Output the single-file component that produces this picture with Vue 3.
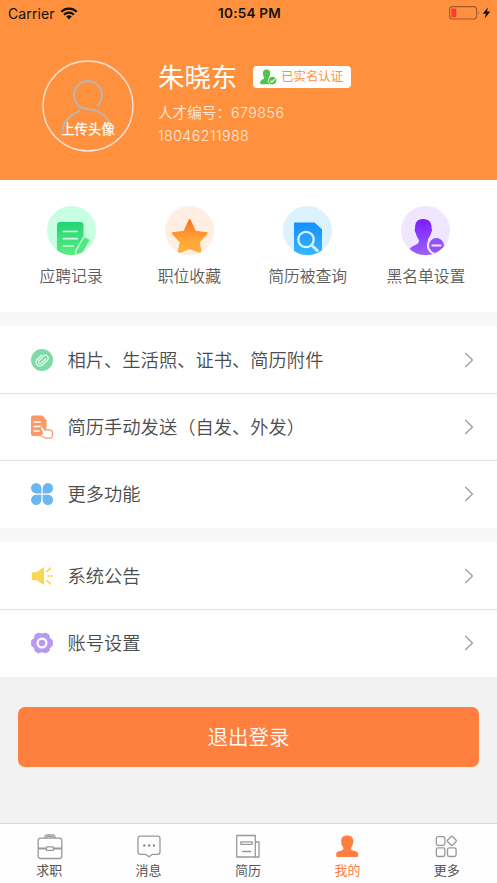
<script setup>
const shortcuts = [
  { key: 'record', label: '应聘记录' },
  { key: 'star', label: '职位收藏' },
  { key: 'search', label: '简历被查询' },
  { key: 'block', label: '黑名单设置' },
]
const groups = [
  [
    { key: 'clip', label: '相片、生活照、证书、简历附件' },
    { key: 'send', label: '简历手动发送（自发、外发）' },
    { key: 'more', label: '更多功能' },
  ],
  [
    { key: 'notice', label: '系统公告' },
    { key: 'gear', label: '账号设置' },
  ],
]
const tabs = [
  { key: 'job', label: '求职' },
  { key: 'msg', label: '消息' },
  { key: 'resume', label: '简历' },
  { key: 'me', label: '我的', active: true },
  { key: 'all', label: '更多' },
]
</script>

<template>
  <div class="page">
    <header class="hero">
      <div class="status">
        <div class="carrier">
          <span>Carrier</span>
          <svg width="18" height="13" viewBox="0 0 18 13" fill="none" stroke="#111" stroke-width="2.2">
            <path d="M1.3 4.7a11 11 0 0 1 15.4 0" />
            <path d="M4.1 7.7a7 7 0 0 1 9.8 0" />
            <path d="M9 12.4 6.2 9.6a4 4 0 0 1 5.6 0Z" fill="#111" stroke="none" />
          </svg>
        </div>
        <span class="time">10:54 PM</span>
        <svg class="battery" width="43" height="14" viewBox="0 0 43 14">
          <rect x="1.6" y=".6" width="27" height="12.4" rx="3" fill="none" stroke="#9c5c30" stroke-width="1.1" />
          <rect x="3.3" y="2.4" width="5" height="8.8" rx="1" fill="#ff3b30" />
          <path d="M30.3 4.8q1.7 2 0 4Z" fill="#9c5c30" />
          <path d="M40 1.2 34.8 7.8h3.1L36.5 12.6l5.800-7H39Z" fill="#111" />
        </svg>
      </div>
      <div class="profile">
        <div class="avatar">
          <svg width="92" height="92" viewBox="0 0 92 92" fill="none">
            <circle cx="46" cy="46" r="45" stroke="#f1e4dc" stroke-width="1.3" />
            <g stroke="#b9b5b0" stroke-width="2" stroke-linecap="round">
              <path d="M55.5 45.500A14 14 0 1 0 46 49.200C58 49.200 68 58 69.700 71" />
              <path d="M37 51C27.500 55.500 21.500 62 20.500 71" />
            </g>
          </svg>
          <span class="upload">上传头像</span>
        </div>
        <div class="info">
          <div class="name-line">
            <span class="name">朱晓东</span>
            <span class="badge">
              <svg width="17" height="16" viewBox="0 0 17 16">
                <path d="M6.5.5c3 0 4 2 3.600 4.400-.2 1.600-1 2.500-1.200 3.300-.1 1.300.6 1.600 2.700 2.400 1.300.6 1.500 1.500 1.500 4.700H1c-1.200 0-1-3.400.3-4.100 2-1 3.200-1.200 2.800-3C3.700 7.300 3 6.500 2.900 4.900 2.700 2.500 3.600.5 6.500.5Z" fill="#4fc24b" />
                <circle cx="12.400" cy="11.600" r="4.200" fill="#4fc24b" stroke="#fff" stroke-width=".8" />
                <path d="m10.400 11.700 1.500 1.500 2.700-3.100" fill="none" stroke="#fff" stroke-width="1.100" />
              </svg>
              <span>已实名认证</span>
            </span>
          </div>
          <div class="number">人才编号：<span class="digits">679856</span></div>
          <div class="phone">18046211988</div>
        </div>
      </div>
    </header>

    <nav class="shortcuts">
      <div v-for="s in shortcuts" :key="s.key" class="shortcut">
        <svg width="49" height="49" viewBox="0 0 49 49">
          <defs>
            <clipPath id="disc"><circle cx="24.500" cy="24.500" r="24.500" /></clipPath>
            <linearGradient id="green" x2="0" y2="1"><stop stop-color="#22d573" /><stop offset="1" stop-color="#5ceb83" /></linearGradient>
            <linearGradient id="orange" gradientUnits="userSpaceOnUse" x1="0" y1="13" x2="0" y2="48"><stop stop-color="#ff6f19" /><stop offset=".6" stop-color="#ffa638" /><stop offset="1" stop-color="#ffaf42" /></linearGradient>
            <linearGradient id="blue" x2="0" y2="1"><stop stop-color="#168fff" /><stop offset="1" stop-color="#35b7ff" /></linearGradient>
            <linearGradient id="purple" x2="0" y2="1"><stop stop-color="#7a1cff" /><stop offset="1" stop-color="#9c62ff" /></linearGradient>
          </defs>
          <g v-if="s.key === 'record'" clip-path="url(#disc)">
            <rect width="49" height="49" fill="#c8ffe2" />
            <path d="M10 49V19q0-3 3-3h20.500q3 0 3 3v12L28.500 44l-.5 5Z" fill="url(#green)" />
            <path d="M16.500 25.500H30M16.500 32.700H30M16.500 40h9.700" stroke="#d7ffe9" stroke-width="1.700" stroke-linecap="round" />
            <path d="M36.500 31.500q.8-1.200 2-.5l3.800 2q1.300.8.500 2L36 46.500 29 49.500v-5Z" fill="#57e584" stroke="#c8ffe2" stroke-width="1.200" />
          </g>
          <g v-else-if="s.key === 'star'" clip-path="url(#disc)">
            <rect width="49" height="49" fill="#ffeee1" />
            <path d="m24.700 14 5.400 11.600 11.700 1.500-8 9.100 2 10.300-11.100-4.300-11.100 4.300 2-10.300-8-9.100 11.700-1.500Z" fill="url(#orange)" stroke="url(#orange)" stroke-width="1.800" stroke-linejoin="round" />
          </g>
          <g v-else-if="s.key === 'search'" clip-path="url(#disc)">
            <rect width="49" height="49" fill="#dcf2ff" />
            <path d="M11 16.500h20.500l7.500 6.700V49H11Z" fill="url(#blue)" />
            <g fill="none" stroke="#d9f2ff"><circle cx="23" cy="33.500" r="7.700" stroke-width="2.300" /><path d="m29 39.500 5.200 5" stroke-width="3" stroke-linecap="round" /></g>
          </g>
          <g v-else clip-path="url(#disc)">
            <rect width="49" height="49" fill="#f0e6ff" />
            <path d="M22.200 13c6.200 0 8.700 4 8.400 9.500.6.500.7 2.600-.5 4.200-.6 3-2.300 5-3.100 6.300-.3 4.500 2 5 6 6.500V49H12L8.300 44.500c.3-5.500 9.700-4.500 9.700-9.500 0-1.800-2.600-4.500-3.400-8.300-1.200-1.600-1.100-3.700-.5-4.200C13.800 17 16 13 22.200 13Z" fill="url(#purple)" />
            <circle cx="35.400" cy="39.500" r="8.500" fill="#9252fb" stroke="#f0e6ff" stroke-width="2.200" />
            <path d="M31.400 39.500h8.200" stroke="#f0e6ff" stroke-width="2.200" stroke-linecap="round" />
          </g>
        </svg>
        <span>{{ s.label }}</span>
      </div>
    </nav>

    <section v-for="(g, i) in groups" :key="i" class="group">
      <div v-for="r in g" :key="r.key" class="row">
        <svg class="row-icon" width="24" height="24" viewBox="0 0 24 24">
          <g v-if="r.key === 'clip'">
            <circle cx="12" cy="12" r="11" fill="#80d9a8" />
            <path transform="rotate(45 12 12)" d="M8.200 8.500v6.600a3.800 3.800 0 0 0 7.600 0V8.200a2.700 2.700 0 0 0-5.400 0v6.600a1.600 1.600 0 0 0 3.200 0V8.800" fill="none" stroke="#effff5" stroke-width="1.200" stroke-linecap="round" />
          </g>
          <g v-else-if="r.key === 'send'">
            <path d="M3.500.5h8.800L16.500 5v7L14 21H3.500q-2.500 0-2.500-2.500V3Q1 .5 3.500.5Z" fill="#fc9866" />
            <path d="M4 7h6.500M4 11.500h8M4 16h5" stroke="#fff" stroke-width="1.500" stroke-linecap="round" />
            <path d="M10.500 13.600c-.9-1.600 1-2.900 2.200-1.400l2.600 3.300c.5-1.200 1.700-1.200 2.300-.5.700-.8 1.900-.6 2.300.3 1.600-.5 2.600.9 2.700 2.400.1 2.600-.4 4-1.500 5.500h-5.300c-1.900-.5-2.900-1.900-4.700-2.200-1.500-.8-.6-2.400 1.600-2Z" fill="#fff" stroke="#fc9866" stroke-width="1.200" stroke-linejoin="round" />
          </g>
          <g v-else-if="r.key === 'more'" fill="#6ab6f0">
            <path d="M11.400 11.400H6.300A5.200 5.200 0 1 1 11.400 6.200Z" />
            <path d="M12.700 11.400V6.200a5.200 5.200 0 1 1 5.100 5.200Z" />
            <path d="M11.400 12.700v5.100a5.200 5.200 0 1 1-5.100-5.100Z" />
            <path d="M12.700 12.700h5.100a5.200 5.200 0 1 1-5.100 5.100Z" />
          </g>
          <g v-else-if="r.key === 'notice'">
            <path d="M2.500 8.200h4.200L13 3.500q1-.5 1 .6v15.800q0 1.100-1 .6l-6.300-4.200H2.500q-.7 0-.7-.7V8.900q0-.7.700-.7Z" fill="#f8d755" />
            <path d="m17 7.300 3.300-3.200M18 12h4.200M17 16.800l3.400 3.200" stroke="#f8d755" stroke-width="1.700" stroke-linecap="round" />
          </g>
          <g v-else>
            <path d="m8.500 2 2 .8h3l2-.8L19 4l.3 2.500 1 1.500 2 1.300v5.400l-2 1.300-1 1.500L19 20l-3.500 2-2-1h-3l-2 1L5 20l-.3-2.500-1-1.500-2-1.300V9.300l2-1.300 1-1.500L5 4Z" fill="#b999f0" stroke="#b999f0" stroke-width="1" stroke-linejoin="round" />
            <circle cx="12" cy="12" r="4.400" fill="#b999f0" stroke="#fff" stroke-width="2.200" />
          </g>
        </svg>
        <span class="row-label">{{ r.label }}</span>
        <svg width="10" height="16" viewBox="0 0 10 16" fill="none" stroke="#999" stroke-width="1.200"><path d="m1.300 1 7.200 7-7.200 7" /></svg>
      </div>
    </section>

    <main class="footer-area"><button class="logout">退出登录</button></main>

    <nav class="tabs">
      <div v-for="t in tabs" :key="t.key" class="tab" :class="{ active: t.active }">
        <svg width="26" height="26" viewBox="0 0 26 26" fill="none" stroke="#999" stroke-width="1.300" stroke-linejoin="round">
          <g v-if="t.key === 'job'">
            <rect x="1.200" y="4.200" width="23.600" height="20.300" rx="2.500" />
            <path d="M1.200 14.500h8M16.700 14.500h8" stroke-width="1.800" /><rect x="9.500" y="12.800" width="7" height="3.600" rx=".5" />
            <path d="M7.800 4Q8 .8 10 .8h6q2 0 2.200 3.200M9.800 4q.2-1.500 1-1.500h4.400q.8 0 1 1.500" />
          </g>
          <g v-else-if="t.key === 'msg'">
            <path d="M4.300 2.200h17.400q2.300 0 2.300 2.300v13.500q0 2.300-2.300 2.300h-5.200L13 22.800l-3.500-2.500H4.300Q2 20.300 2 18V4.500q0-2.300 2.300-2.300Z" />
            <path d="M7.300 11.500h2M12.100 11.500h2M16.900 11.500h2" stroke="#777" stroke-width="2" />
          </g>
          <g v-else-if="t.key === 'resume'">
            <path d="M20.300 23H1.700V1.500h18.600Zm0-15H24v15h-3.700M5.800 7.800h11.400v2.500H5.800ZM7 17.500h9.200" />
          </g>
          <path v-else-if="t.key === 'me'" stroke="none" fill="#ff7f3e" transform="translate(-.8 0)" d="M13 1.500c4.500 0 6.400 2.600 6 6.500-.1 3.400-1.800 4.500-2.300 6.200-.2 1.700 1.500 2.200 4.800 3 2.300.6 2.800 2 2.500 4.300-.2 1-.7 1.500-1.700 1.500H3.700c-1 0-1.500-.5-1.700-1.500-.3-2.300.2-3.700 2.500-4.300 3.300-.8 5-1.300 4.800-3C8.800 12.500 7.100 11.400 7 8c-.4-3.900 1.500-6.500 6-6.500Z" />
          <g v-else>
            <rect x="2.300" y="2.700" width="8.600" height="8.600" rx="1.800" /><rect x="2.300" y="13.900" width="8.600" height="8.600" rx="1.800" /><rect x="13.500" y="13.900" width="8.600" height="8.600" rx="1.800" />
            <rect x="14.200" y="3.300" width="7.200" height="7.200" rx="1.300" transform="rotate(45 17.800 6.900)" />
          </g>
        </svg>
        <span>{{ t.label }}</span>
      </div>
    </nav>
  </div>
</template>

<style>
body { margin: 0; }
</style>

<style scoped>
.page { width: 497px; height: 883px; display: flex; flex-direction: column; overflow: hidden; background: #f7f7f7; font-family: Inter, "Noto Sans CJK SC", sans-serif; font-weight: 350; color: #555; }
.page * { box-sizing: border-box; }
svg { display: block; flex: none; }
.hero { height: 180px; background: #ff913e; color: #fff; }
.status { height: 26px; padding: 0 6px 0 8px; display: grid; grid-template-columns: 1fr auto 1fr; align-items: center; color: #111; font-size: 14px; font-weight: 400; letter-spacing: .1px; }
.carrier { display: flex; align-items: center; gap: 5px; }
.time { font-weight: 600; font-size: 13.5px; letter-spacing: .25px; }
.battery { justify-self: end; }
.profile { display: flex; padding: 34px 0 0 42px; }
.avatar { position: relative; width: 92px; height: 92px; }
.upload { position: absolute; left: 0; top: 59px; width: 92px; text-align: center; font-size: 13.4px; line-height: 20px; font-weight: 500; }
.info { margin-left: 24px; }
.name-line { display: flex; align-items: center; height: 34px; gap: 16px; }
.name { font-size: 26.4px; line-height: 34px; font-weight: 400; }
.badge { display: flex; align-items: center; width: 98px; height: 22px; padding-left: 7px; gap: 4px; border-radius: 4px; background: #fff; color: #ff913e; font-size: 12.4px; line-height: 20px; font-weight: 400; }
.number { margin-top: 8px; font-size: 14.6px; line-height: 22px; color: #ffe8d8; white-space: nowrap; }
.digits { font-size: 14.2px; letter-spacing: .5px; }
.phone { font-size: 14.2px; line-height: 23px; letter-spacing: .45px; color: #ffe8d8; }
.shortcuts { height: 132px; padding: 26px 12px 0; display: grid; grid-template-columns: repeat(4, 1fr); background: #fff; }
.shortcut { display: flex; flex-direction: column; align-items: center; gap: 10px; font-size: 15.8px; line-height: 24px; color: #5c5c5c; }
.group { margin-top: 14px; background: #fff; }
.row { display: flex; align-items: center; height: 67px; padding: 0 23px 0 30px; }
.row + .row { border-top: 1px solid #e4e4e4; }
.row:last-child { height: 68px; padding-bottom: 1px; }
.row-label { flex: 1; margin-left: 13.5px; font-size: 18.3px; line-height: 28px; color: #4c4c4c; white-space: nowrap; }
.footer-area { flex: 1; padding: 29.5px 18px 0; background: #f2f2f2; }
.logout { display: block; width: 461px; height: 60px; padding: 0 0 1px; border: 0; border-radius: 7px; background: #ff7f3e; color: #fff; font: 350 20.5px "Noto Sans CJK SC", sans-serif; }
.tabs { height: 60px; padding-top: 10px; display: grid; grid-template-columns: repeat(5, 1fr); border-top: 1px solid #d7d7d7; background: #fefefe; }
.tab { display: flex; flex-direction: column; align-items: center; gap: 0; font-size: 13px; line-height: 20px; font-weight: 400; color: #555; }
.tab span { margin-right: 1px; }
.active { color: #ff7f3e; }
</style>
